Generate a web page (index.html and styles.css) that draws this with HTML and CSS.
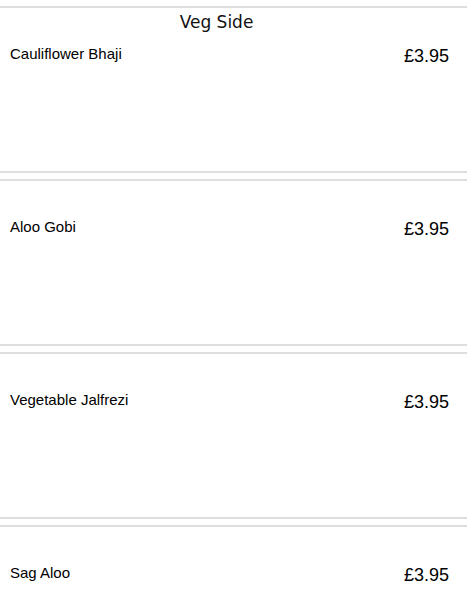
FILE: index.html
```html
<!DOCTYPE html>
<html lang="en">
<head>
  <meta charset="UTF-8" />
  <meta name="viewport" content="width=device-width, initial-scale=1.0"/>
  <title>Veg Side</title>
  <link rel="stylesheet" href="styles.css">
</head>
<body>

  <div class="menu">
    <div class="card">
      <div class="card-head">
        <h2 class="section-title">Veg Side</h2>
      </div>
      <div class="item">
        <span class="item-name">Cauliflower Bhaji</span>
        <span class="item-price">£3.95</span>
      </div>
    </div>

    <div class="card">
      <div class="card-head"></div>
      <div class="item">
        <span class="item-name">Aloo Gobi</span>
        <span class="item-price">£3.95</span>
      </div>
    </div>

    <div class="card">
      <div class="card-head"></div>
      <div class="item">
        <span class="item-name">Vegetable Jalfrezi</span>
        <span class="item-price">£3.95</span>
      </div>
    </div>

    <div class="card">
      <div class="card-head"></div>
      <div class="item">
        <span class="item-name">Sag Aloo</span>
        <span class="item-price">£3.95</span>
      </div>
    </div>
  </div>

</body>
</html>
```

FILE: styles.css
```css
* {
  box-sizing: border-box;
}

body {
  font-family: 'Liberation Sans', Arial, sans-serif;
  background: #ffffff;
  color: #000000;
  margin: 0;
  padding: 0;
}

.menu {
  padding-top: 6px;
}

.card {
  height: 167px;
  margin-bottom: 6px;
  border-top: 2px solid #dedede;
  border-bottom: 2px solid #dedede;
}

.card-head {
  height: 36px;
  padding: 4px 34px 0 0;
}

.section-title {
  margin: 0;
  text-align: center;
  font-family: 'DejaVu Sans', Verdana, sans-serif;
  font-size: 17px;
  font-weight: normal;
  line-height: 20px;
  color: #111;
}

.item {
  display: flex;
  justify-content: space-between;
  align-items: flex-start;
  padding: 0 18px 0 10px;
}

.item-name {
  font-size: 15px;
  line-height: 17px;
  margin-top: 1px;
}

.item-price {
  font-size: 18px;
  line-height: 21px;
  margin-top: 2px;
}
```
